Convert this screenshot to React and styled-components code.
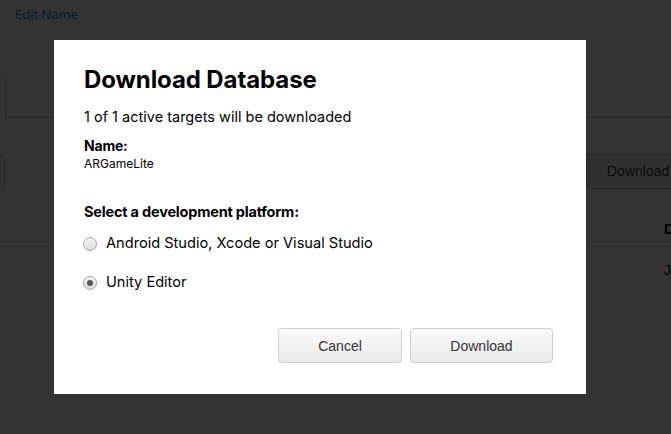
import React from "react";
import styled, { createGlobalStyle } from "styled-components";

const Global = createGlobalStyle`
  html, body { margin: 0; padding: 0; }
  body {
    width: 671px; height: 434px; overflow: hidden;
    background: #fff;
    font-family: "Open Sans", "Liberation Sans", sans-serif;
  }
`;

const Page = styled.div`
  position: relative;
  width: 671px;
  height: 434px;
  overflow: hidden;
  background: #fff;
`;

const Under = styled.div`
  display: flex;
  flex-direction: column;
  width: 671px;
`;

const EditLink = styled.a`
  display: block;
  margin: 4px 0 0 15px;
  height: 20px;
  font-size: 13px;
  line-height: 20px;
  color: #337ab7;
`;

const TabRow = styled.div`
  display: flex;
  margin-top: 52px;
  height: 41px;
  border-bottom: 1px solid #ccc;
`;

const Tab = styled.div`
  width: 6px;
  box-sizing: border-box;
  border: 1px solid #ccc;
  border-left: none;
  border-bottom: none;
  border-radius: 0 4px 0 0;
  background: #fff;
  margin-bottom: -1px;
  height: 42px;
`;

const Toolbar = styled.div`
  display: flex;
  justify-content: space-between;
  margin-top: 36px;
  height: 35px;
`;

const GhostBtn = styled.div`
  box-sizing: border-box;
  width: ${(p) => p.$w}px;
  height: 35px;
  border: 1px solid #ccc;
  border-radius: ${(p) => (p.$left ? "0 4px 4px 0" : "4px 0 0 0")};
  border-left: ${(p) => (p.$left ? "none" : "1px solid #ccc")};
  border-right: ${(p) => (p.$left ? "1px solid #ccc" : "none")};
  background: #f0f0f0;
  font-family: "Liberation Sans", Arial, sans-serif;
  font-size: 14px;
  color: #333;
  line-height: 33px;
  padding-left: ${(p) => (p.$left ? 0 : 20)}px;
  white-space: nowrap;
  overflow: hidden;
`;

const TableHead = styled.div`
  display: flex;
  justify-content: flex-end;
  margin-top: 22px;
  height: 35px;
  border-bottom: 1px solid #ddd;
  font-family: "Liberation Sans", Arial, sans-serif;
  font-weight: bold;
  font-size: 14px;
  line-height: 36px;
  color: #000;
`;

const TableRow = styled.div`
  display: flex;
  justify-content: flex-end;
  height: 46px;
  font-family: "Liberation Sans", Arial, sans-serif;
  font-size: 14px;
  line-height: 46px;
  color: #111;
`;

const Cell = styled.span`
  width: 7px;
  overflow: hidden;
`;

const Backdrop = styled.div`
  position: absolute;
  inset: 0;
  background: rgba(0, 0, 0, 0.8);
`;

const Modal = styled.div`
  position: absolute;
  left: 54px;
  top: 40px;
  width: 532px;
  height: 354px;
  box-sizing: border-box;
  background: #fff;
  padding: 24px 33px 0 30px;
  display: flex;
  flex-direction: column;
  font-family: "Inter", "Roboto", sans-serif;
  color: #000;
`;

const Title = styled.h2`
  margin: 0;
  font-size: 24px;
  line-height: 32px;
  font-weight: 700;
  letter-spacing: -0.1px;
`;

const Sub = styled.p`
  margin: 11px 0 0;
  font-size: 14.5px;
  line-height: 20px;
  font-weight: 400;
`;

const Label = styled.div`
  margin-top: ${(p) => p.$mt}px;
  font-size: ${(p) => p.$size}px;
  line-height: 18px;
  font-weight: 700;
  letter-spacing: -0.2px;
`;

const Value = styled.div`
  font-size: 12px;
  line-height: 16px;
  margin-top: 1px;
`;

const Options = styled.div`
  display: flex;
  flex-direction: column;
  gap: 20px;
  margin-top: 13px;
`;

const Option = styled.label`
  display: flex;
  align-items: center;
  gap: 9px;
  font-size: 14.6px;
  line-height: 19px;
`;

const Radio = styled.span`
  position: relative;
  width: 14px;
  height: 14px;
  box-sizing: border-box;
  border-radius: 50%;
  border: 1px solid #a6a6a6;
  background: linear-gradient(#f4f4f4, #dcdcdc);
  margin-left: -1px;
  &::after {
    content: "";
    display: ${(p) => (p.$checked ? "block" : "none")};
    position: absolute;
    left: 3px;
    top: 3px;
    width: 6px;
    height: 6px;
    border-radius: 50%;
    background: #555;
  }
`;

const Footer = styled.div`
  display: flex;
  justify-content: flex-end;
  gap: 8px;
  margin-top: auto;
  margin-bottom: 31px;
`;

const Button = styled.button`
  width: ${(p) => p.$w}px;
  height: 35px;
  box-sizing: border-box;
  border: 1px solid #cfcfcf;
  border-radius: 4px;
  background: linear-gradient(#fafafa, #ebebeb);
  font-family: "Liberation Sans", Arial, sans-serif;
  font-size: 14px;
  color: #333;
  padding: 0;
`;

export default function App() {
  return (
    <Page>
      <Global />
      <Under>
        <EditLink>Edit Name</EditLink>
        <TabRow>
          <Tab />
        </TabRow>
        <Toolbar>
          <GhostBtn $w={5} $left />
          <GhostBtn $w={85}>Download</GhostBtn>
        </Toolbar>
        <TableHead>
          <Cell>D</Cell>
        </TableHead>
        <TableRow>
          <Cell>J</Cell>
        </TableRow>
      </Under>
      <Backdrop />
      <Modal role="dialog">
        <Title>Download Database</Title>
        <Sub>1 of 1 active targets will be downloaded</Sub>
        <Label $mt={10} $size={14}>Name:</Label>
        <Value>ARGameLite</Value>
        <Label $mt={31} $size={14.5}>Select a development platform:</Label>
        <Options>
          <Option>
            <Radio />
            Android Studio, Xcode or Visual Studio
          </Option>
          <Option>
            <Radio $checked />
            Unity Editor
          </Option>
        </Options>
        <Footer>
          <Button $w={124}>Cancel</Button>
          <Button $w={143}>Download</Button>
        </Footer>
      </Modal>
    </Page>
  );
}
